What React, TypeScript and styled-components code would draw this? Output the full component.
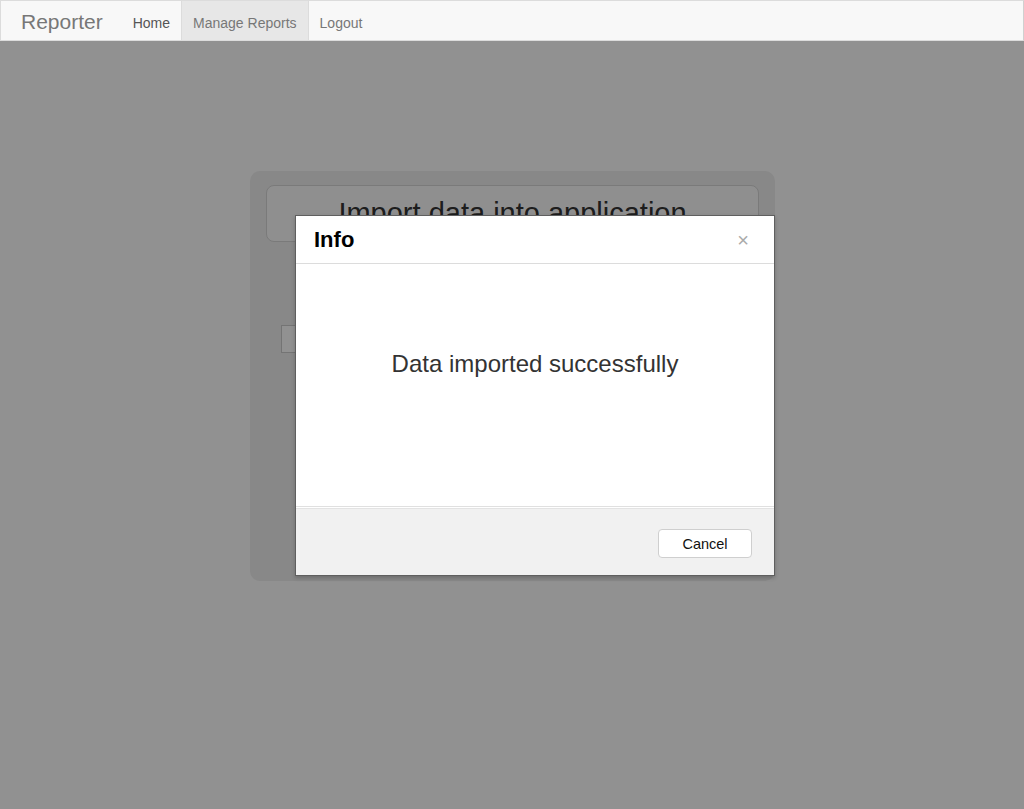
import React from "react";
import styled, { createGlobalStyle } from "styled-components";

const GlobalStyle = createGlobalStyle`
  html, body {
    margin: 0;
    padding: 0;
    height: 100%;
    background: #ffffff;
    font-family: "Liberation Sans", Arial, sans-serif;
    overflow: hidden;
  }
`;

const Page = styled.div`
  position: relative;
  width: 1024px;
  height: 809px;
  background: #ffffff;
`;

/* Navbar stays above the backdrop */
const Navbar = styled.nav`
  position: relative;
  z-index: 30;
  display: flex;
  align-items: stretch;
  width: 1022px;
  height: 39px;
  box-sizing: content-box;
  background: #f8f8f8;
  border: 1px solid #dcdcdc;
  border-right-color: #d0d0d0;
`;

const Brand = styled.span`
  display: flex;
  align-items: center;
  padding: 3px 19px 0 20px;
  font-size: 21px;
  color: #777;
`;

const NavLink = styled.a<{ $active?: boolean; $dark?: boolean }>`
  display: flex;
  align-items: center;
  padding: 4px 11px 0;
  font-size: 14px;
  text-decoration: none;
  color: ${({ $dark }) => ($dark ? "#555" : "#777")};
  background: ${({ $active }) => ($active ? "#e7e7e7" : "transparent")};
  border-left: ${({ $active }) => ($active ? "1px solid #dcdcdc" : "none")};
  border-right: ${({ $active }) => ($active ? "1px solid #dcdcdc" : "none")};
`;

const Content = styled.main`
  display: flex;
  justify-content: center;
  padding-top: 130px;
  padding-left: 1px;
`;

const Well = styled.section`
  width: 493px;
  height: 382px;
  padding: 14px 16px;
  background: #efefef;
  border-radius: 10px;
`;

const TitleBox = styled.div`
  height: 57px;
  border: 1px solid #d6d6d6;
  border-radius: 8px;
  background: #fcfcfc;
  display: flex;
  justify-content: center;
  padding-top: 11px;
  box-sizing: border-box;
  font-size: 29px;
  color: #333;
`;

const FileInput = styled.div`
  margin: 83px 0 0 15px;
  width: 300px;
  height: 26px;
  border: 1px solid #ccc;
  background: #fff;
`;

const Backdrop = styled.div`
  position: absolute;
  inset: 0;
  z-index: 20;
  background: rgba(0, 0, 0, 0.431);
`;

const Modal = styled.div`
  position: absolute;
  z-index: 40;
  left: 295px;
  top: 215px;
  width: 478px;
  border: 1px solid #5f5f5f;
  background: #fff;
  box-shadow: 0 2px 4px rgba(0, 0, 0, 0.2);
`;

const ModalHeader = styled.div`
  display: flex;
  align-items: center;
  justify-content: space-between;
  height: 47px;
  padding: 0 25px 0 18px;
  border-bottom: 1px solid #dcdcdc;
`;

const ModalTitle = styled.h4`
  margin: 0;
  font-size: 22px;
  font-weight: bold;
  color: #000;
`;

const Close = styled.button`
  border: none;
  background: none;
  padding: 0;
  font-family: "Liberation Sans", Arial, sans-serif;
  font-size: 20px;
  line-height: 1;
  color: #aaa;
`;

const ModalBody = styled.div`
  height: 243px;
  display: flex;
  justify-content: center;
  padding-top: 86px;
  box-sizing: border-box;
  font-size: 24px;
  color: #333;
  border-bottom: 1px solid #e0e0e0;
  box-shadow: 0 1px 0 #ffffff;
`;

const ModalFooter = styled.div`
  display: flex;
  justify-content: flex-end;
  align-items: center;
  height: 66px;
  margin-top: 1px;
  padding: 0 22px;
  background: #f1f1f1;
  border-top: 1px solid #e3e3e3;
`;

const Button = styled.button`
  width: 94px;
  height: 29px;
  margin-top: 3px;
  background: #fff;
  border: 1px solid #cfcfcf;
  border-radius: 4px;
  font-family: "Liberation Sans", Arial, sans-serif;
  font-size: 14.5px;
  color: #111;
`;

export default function App() {
  return (
    <Page>
      <GlobalStyle />
      <Navbar>
        <Brand>Reporter</Brand>
        <NavLink $dark>Home</NavLink>
        <NavLink $active>Manage Reports</NavLink>
        <NavLink>Logout</NavLink>
      </Navbar>
      <Content>
        <Well>
          <TitleBox>Import data into application</TitleBox>
          <FileInput />
        </Well>
      </Content>
      <Backdrop />
      <Modal>
        <ModalHeader>
          <ModalTitle>Info</ModalTitle>
          <Close>×</Close>
        </ModalHeader>
        <ModalBody>Data imported successfully</ModalBody>
        <ModalFooter>
          <Button>Cancel</Button>
        </ModalFooter>
      </Modal>
    </Page>
  );
}
